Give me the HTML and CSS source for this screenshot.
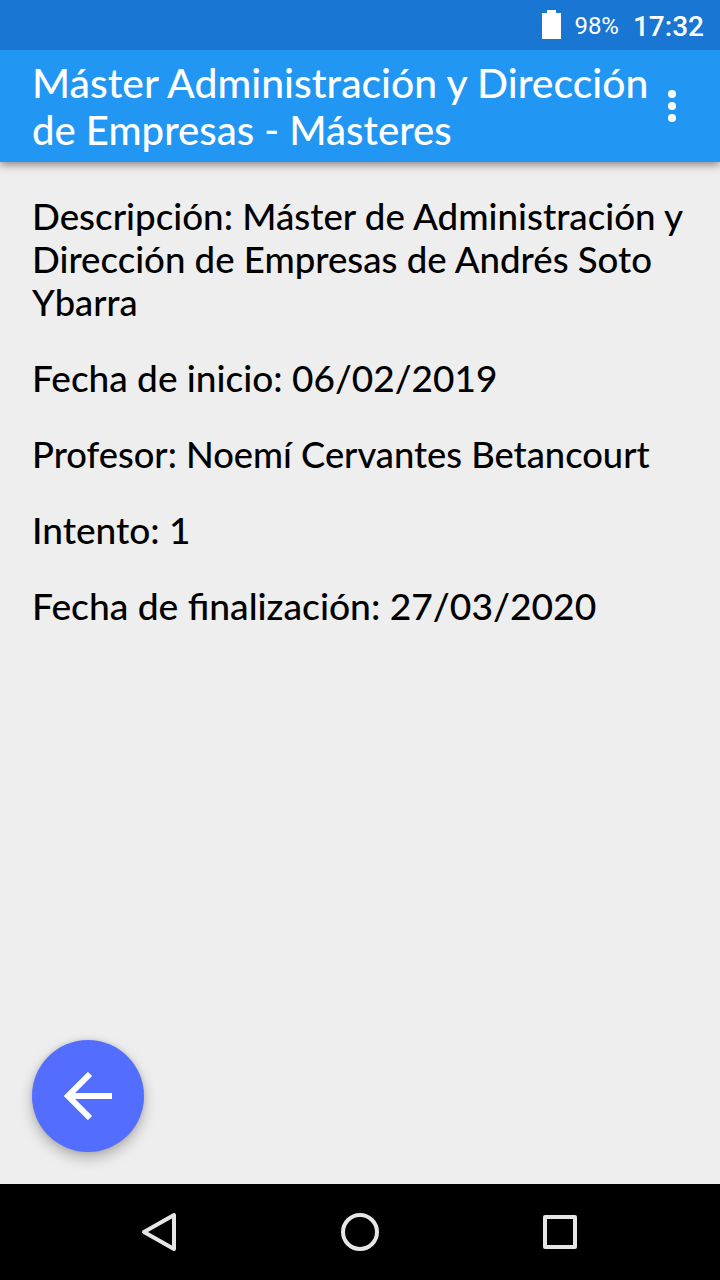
FILE: index.html
```html
<!DOCTYPE html>
<html lang="es">
<head>
<meta charset="utf-8">
<title>Máster Administración y Dirección de Empresas</title>
<link rel="stylesheet" href="styles.css">
</head>
<body>
<div class="screen">
  <div class="status">
    <svg class="battery" width="20" height="30" viewBox="0 0 20 30"><path d="M0 3h5V0h9v3h5v26H0z" fill="#fff"/></svg>
    <span class="percent">98%</span>
    <span class="clock">17:32</span>
  </div>
  <header class="toolbar">
    <h1 class="title"><span class="line t1">Máster Administración y Dirección</span> <span class="line t2">de Empresas - Másteres</span></h1>
    <svg class="more" width="8" height="32" viewBox="0 0 8 32" fill="#fff"><circle cx="4" cy="4" r="4"/><circle cx="4" cy="16" r="4"/><circle cx="4" cy="28" r="4"/></svg>
  </header>
  <main class="content">
    <p class="field"><span class="line l1">Descripción: Máster de Administración y</span> <span class="line l2">Dirección de Empresas de Andrés Soto</span> <span class="line l3">Ybarra</span></p>
    <p class="field"><span class="line l4">Fecha de inicio: 06/02/2019</span></p>
    <p class="field"><span class="line l5">Profesor: Noemí Cervantes Betancourt</span></p>
    <p class="field"><span class="line l6">Intento: 1</span></p>
    <p class="field"><span class="line l7">Fecha de finalización: 27/03/2020</span></p>
    <button class="fab" aria-label="Volver">
      <svg width="48" height="48" viewBox="0 0 48 48" fill="none" stroke="#fff" stroke-width="6"><path d="M48 24H6M26 2 4 24l22 22"/></svg>
    </button>
  </main>
  <nav class="navbar">
    <svg width="200" height="96" viewBox="0 0 200 96"><path d="M134 31v34L104 48z"/></svg>
    <svg width="200" height="96" viewBox="0 0 200 96"><circle cx="100" cy="48" r="17"/></svg>
    <svg width="200" height="96" viewBox="0 0 200 96"><path d="M65 33h30v30H65z"/></svg>
  </nav>
</div>
</body>
</html>
```
FILE: styles.css
```css
* { box-sizing: border-box; }
body { margin: 0; background: #eee; }
.screen { width: 720px; height: 1280px; display: flex; flex-direction: column; overflow: hidden; font-family: Lato, "Noto Sans", sans-serif; }
.status { height: 50px; flex: none; background: #1976d2; color: #fff; display: flex; align-items: center; justify-content: flex-end; padding-right: 16px; font-family: Roboto, sans-serif; z-index: 2; }
.battery { margin-right: 12px; }
.percent { font-size: 24px; line-height: 28px; margin-right: 14px; margin-top: 2px; }
.clock { font-size: 28px; line-height: 32px; font-weight: 500; margin-top: 3px; }
.toolbar { height: 112px; flex: none; background: #2196f3; color: #fff; display: flex; align-items: center; justify-content: space-between; padding: 0 44px 0 32px; box-shadow: 0 3px 8px rgba(0, 0, 0, .42); z-index: 1; }
.title { margin: 0; padding-top: 2px; font-size: 40px; line-height: 47px; font-weight: 500; }
.line { display: block; width: max-content; white-space: nowrap; transform-origin: 0 50%; }
.t1 { transform: scaleX(1.0216); }
.t2 { transform: scaleX(1.002); }
.l1 { transform: scaleX(.9925); }
.l2 { transform: scaleX(.989); }
.l3 { transform: scaleX(.98); }
.l5 { transform: scaleX(.981); }
.l7 { transform: scaleX(1.0055); }
.content { flex: 1; display: flex; flex-direction: column; padding: 32px; background: #eee; }
.field { margin: 0 0 33px; font-size: 37px; line-height: 43px; font-weight: 500; color: #000; }
.fab { margin-top: auto; width: 112px; height: 112px; flex: none; border: 0; border-radius: 50%; background: #536dfe; padding: 0; display: flex; align-items: center; justify-content: center; box-shadow: 0 6px 14px rgba(0, 0, 0, .26), 0 0 5px rgba(0, 0, 0, .12); }
.navbar { height: 96px; flex: none; background: #000; display: flex; justify-content: center; z-index: 1; }
.navbar svg { fill: none; stroke: #e6e6e6; stroke-width: 4; stroke-linejoin: round; }
.navbar svg:first-child { margin-right: 20px; }
.navbar svg:last-child { margin-left: 20px; }
.navbar svg { flex: none; }
```
